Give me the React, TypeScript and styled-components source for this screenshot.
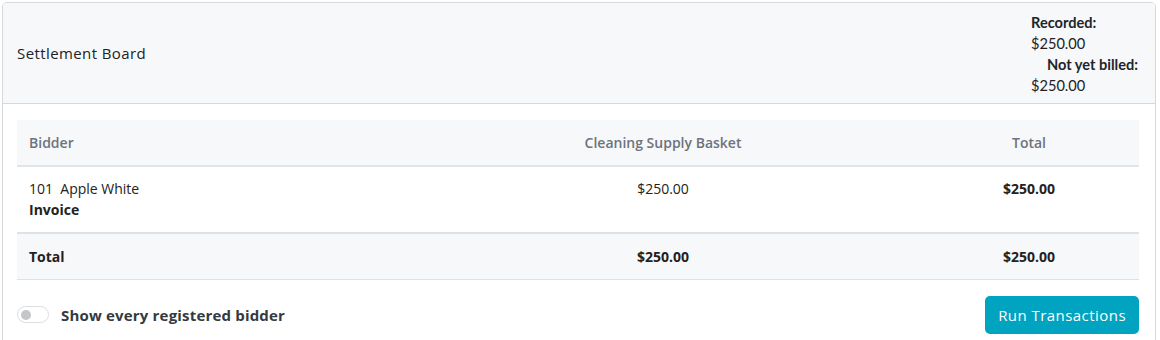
import React from "react";
import styled, { createGlobalStyle } from "styled-components";

const Global = createGlobalStyle`
  html, body { margin: 0; padding: 0; background: #fff; }
  body { padding: 2px 4px 0 2px; font-family: "Open Sans", "Noto Sans", sans-serif; color: #212529; }
  * { box-sizing: border-box; }
`;

const Card = styled.div`
  border: 1px solid #d6d8db;
  border-radius: 5px;
  background: #fff;
  height: 360px;
  overflow: hidden;
`;

const Header = styled.div`
  display: flex;
  align-items: center;
  justify-content: space-between;
  background: #f7f8fa;
  border-bottom: 1px solid #d6d8db;
  height: 101px;
  padding: 0 17px 0 14px;
`;

const Title = styled.div`
  font-size: 15px;
  letter-spacing: 0.4px;
  color: #222;
`;

const Summary = styled.div`
  width: 107px;
  font-family: "Lato", sans-serif;
  font-size: 14.6px;
  line-height: 21px;
  margin-top: 1px;
`;

const Label = styled.div<{ $align?: string }>`
  font-weight: 700;
  text-align: ${(p) => p.$align || "left"};
`;

const Value = styled.div`
  color: #222;
`;

const Body = styled.div`
  padding: 16px 16px 0 14px;
`;

const Table = styled.table`
  width: 100%;
  border-collapse: collapse;
  font-size: 14px;
  table-layout: fixed;
`;

const Th = styled.th<{ $align?: string }>`
  background: #f7f8fa;
  color: #6c737c;
  font-weight: 600;
  text-align: ${(p) => p.$align || "center"};
  height: 46px;
  padding: 0 12px;
  border-bottom: 2px solid #e2e4e7;
  vertical-align: middle;
`;

const Td = styled.td<{ $align?: string; $bold?: boolean }>`
  text-align: ${(p) => p.$align || "center"};
  font-weight: ${(p) => (p.$bold ? 700 : 400)};
  padding: 11px 12px 0;
  height: 67px;
  vertical-align: top;
  line-height: 21px;
  color: #222;
`;

const TotalRow = styled.tr`
  background: #f7f8fa;
  border-top: 2px solid #dee1e5;
  border-bottom: 1px solid #dee1e5;
`;

const TotalTd = styled.td<{ $align?: string }>`
  text-align: ${(p) => p.$align || "center"};
  font-weight: 700;
  height: 46px;
  padding: 0 12px;
  vertical-align: middle;
  color: #222;
`;

const Invoice = styled.div`
  font-weight: 700;
`;

const Footer = styled.div`
  display: flex;
  align-items: center;
  justify-content: space-between;
  margin-top: 16px;
`;

const ToggleLabel = styled.label`
  display: flex;
  align-items: center;
  gap: 12px;
  font-size: 15px;
  font-weight: 700;
  letter-spacing: 0.18px;
  color: #333a40;
`;

const Toggle = styled.span`
  display: inline-flex;
  align-items: center;
  width: 32px;
  height: 17px;
  border: 1px solid #dcdde0;
  border-radius: 9px;
  padding: 0 3px;
  background: #fff;
  &::before {
    content: "";
    width: 10px;
    height: 10px;
    border-radius: 50%;
    background: #c4c6c9;
  }
`;

const Button = styled.button`
  background: #00a3c0;
  color: #fff;
  border: none;
  border-radius: 5px;
  height: 38px;
  padding: 0 13px;
  font-size: 15px;
  letter-spacing: 0.45px;
  font-family: inherit;
  cursor: pointer;
`;

export default function App() {
  return (
    <>
      <Global />
      <Card>
        <Header>
          <Title>Settlement Board</Title>
          <Summary>
            <Label>Recorded:</Label>
            <Value>$250.00</Value>
            <Label $align="right">Not yet billed:</Label>
            <Value>$250.00</Value>
          </Summary>
        </Header>
        <Body>
          <Table>
            <colgroup>
              <col style={{ width: 390 }} />
              <col style={{ width: 512 }} />
              <col style={{ width: 220 }} />
            </colgroup>
            <thead>
              <tr>
                <Th $align="left">Bidder</Th>
                <Th>Cleaning Supply Basket</Th>
                <Th>Total</Th>
              </tr>
            </thead>
            <tbody>
              <tr>
                <Td $align="left">
                  101&nbsp;&nbsp;Apple White
                  <Invoice>Invoice</Invoice>
                </Td>
                <Td>$250.00</Td>
                <Td $bold>$250.00</Td>
              </tr>
              <TotalRow>
                <TotalTd $align="left">Total</TotalTd>
                <TotalTd>$250.00</TotalTd>
                <TotalTd>$250.00</TotalTd>
              </TotalRow>
            </tbody>
          </Table>
          <Footer>
            <ToggleLabel>
              <Toggle />
              Show every registered bidder
            </ToggleLabel>
            <Button>Run Transactions</Button>
          </Footer>
        </Body>
      </Card>
    </>
  );
}
